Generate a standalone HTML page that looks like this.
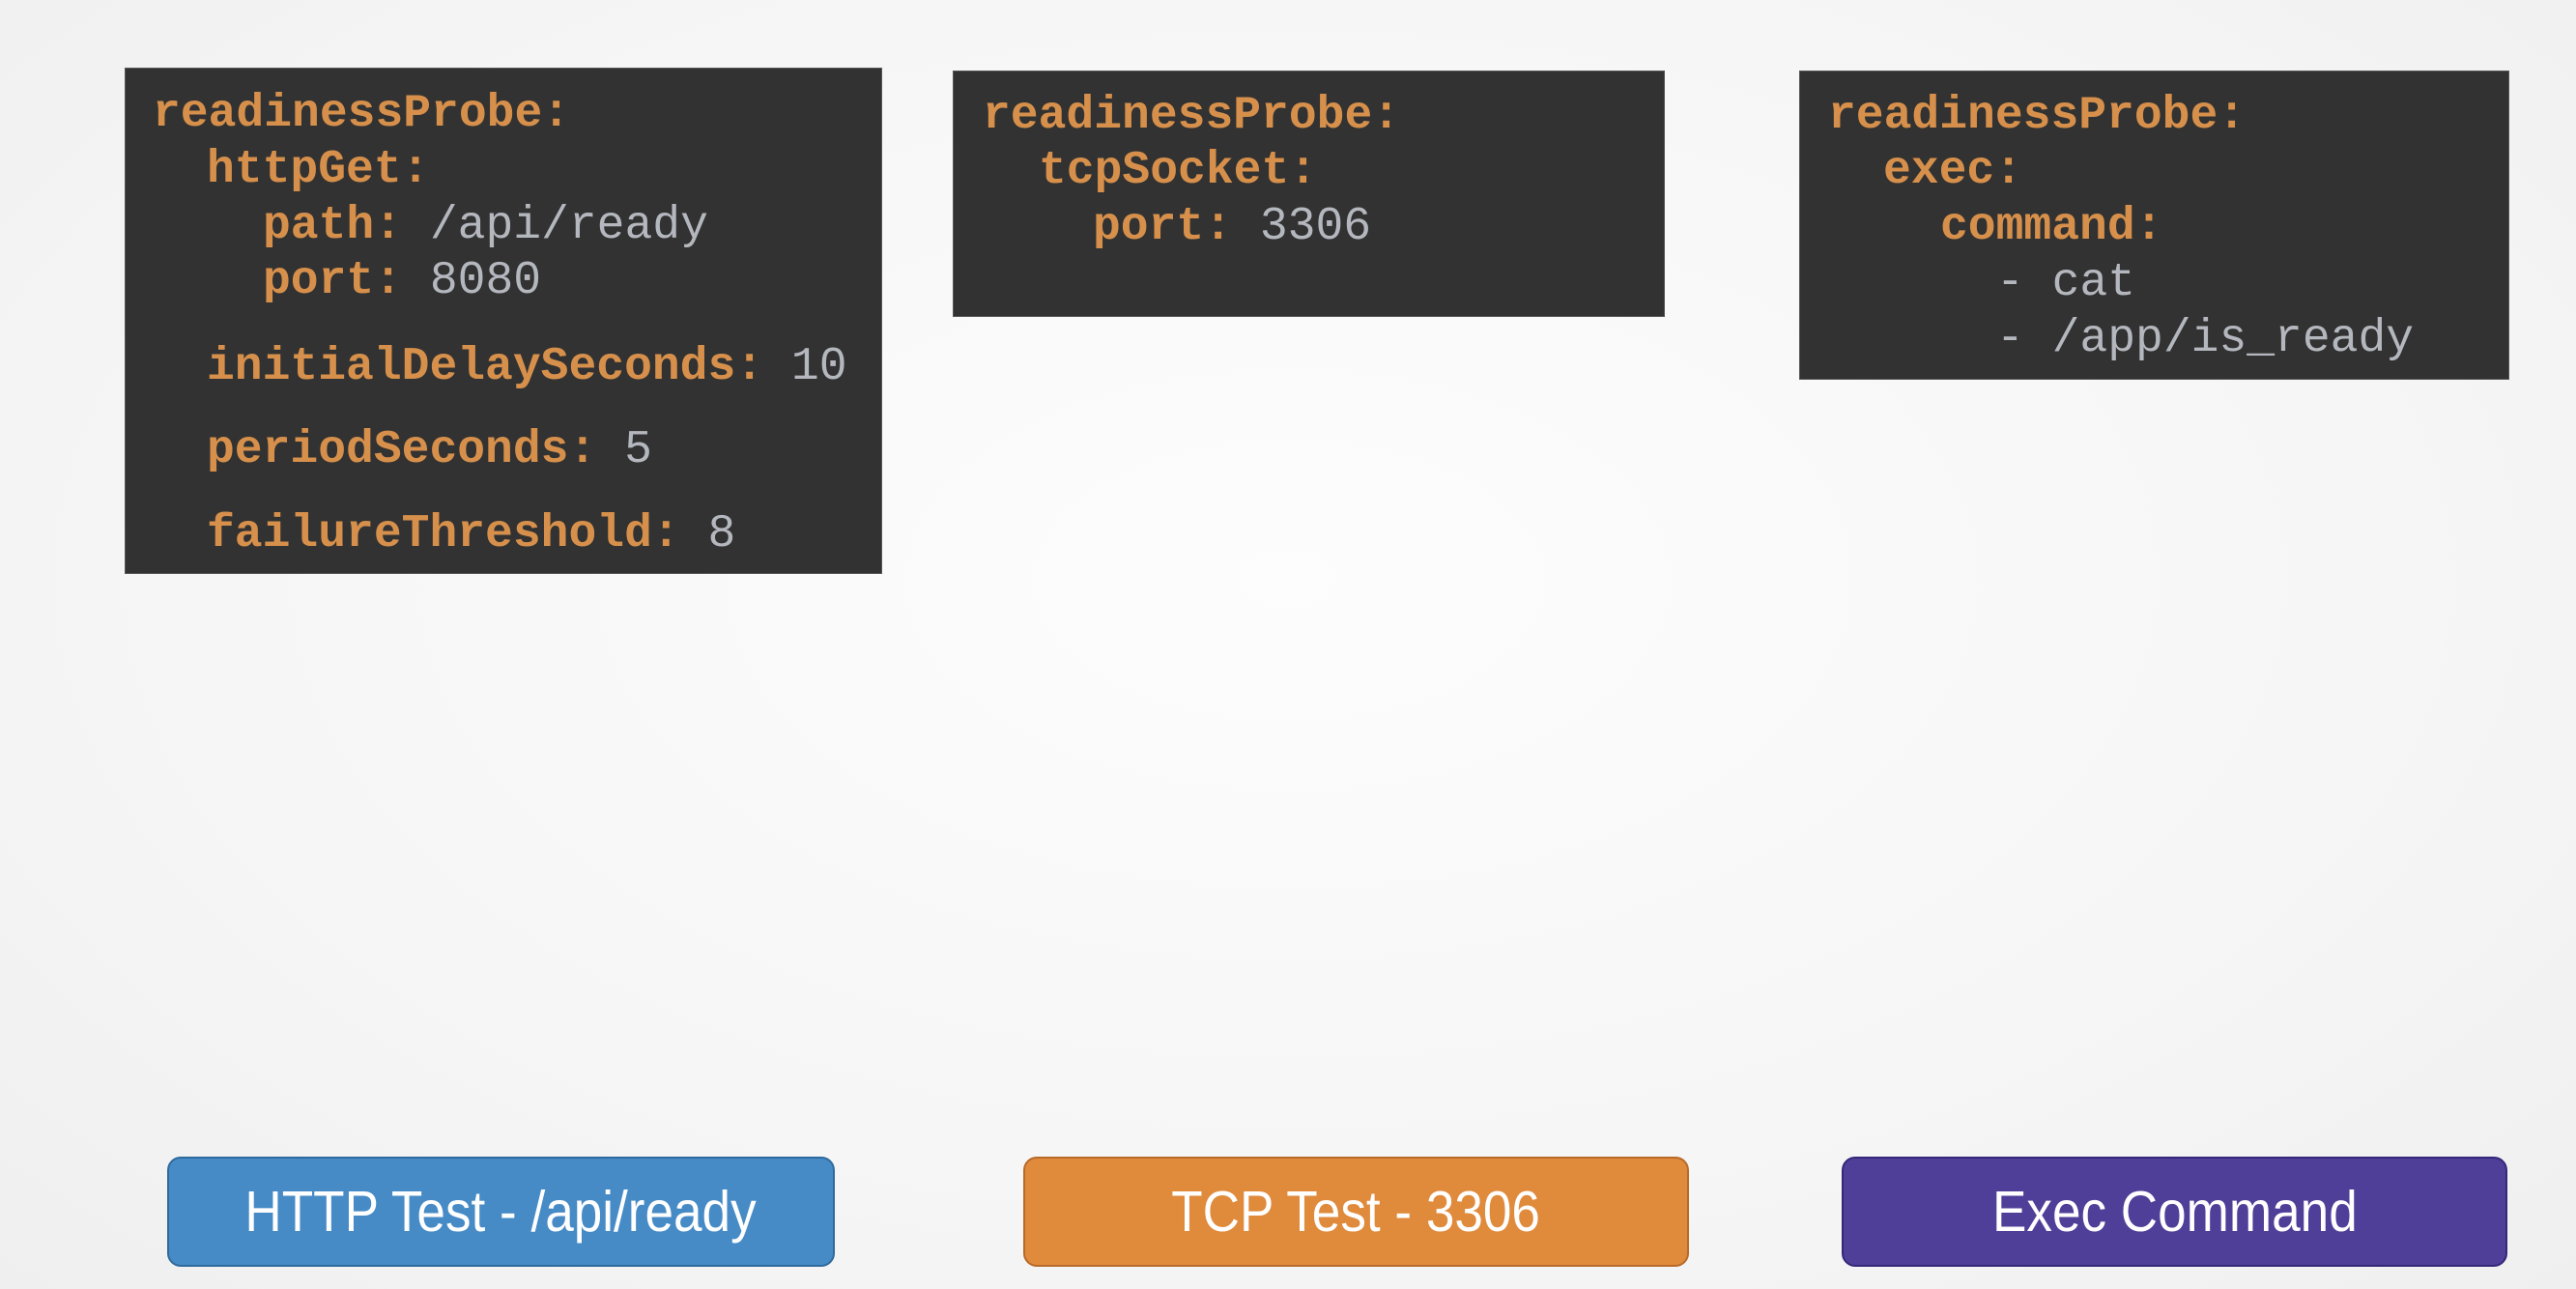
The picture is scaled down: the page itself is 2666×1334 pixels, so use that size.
<!DOCTYPE html>
<html><head><meta charset="utf-8"><style>
body{margin:0;width:2666px;height:1334px;overflow:hidden;background:radial-gradient(ellipse at 50% 45%,#fdfdfd 0%,#f6f6f6 60%,#efefef 100%);position:relative;font-family:"Liberation Mono",monospace;}
.box{position:absolute;background:#323232;border:1px solid #555;}
.l{position:absolute;font-size:48px;line-height:58px;white-space:pre;color:#d6904b;font-weight:bold;}
.v{color:#b4b8be;font-weight:normal;}
.btn{position:absolute;height:114px;border-radius:14px;color:#fff;font-family:"Liberation Sans",sans-serif;font-size:59px;display:flex;align-items:center;justify-content:center;box-sizing:border-box;}
.btn span{display:inline-block;transform:scaleX(0.9);}
</style></head><body>
<div class="box" style="left:129px;top:70px;width:782px;height:522px"></div>
<div class="l" style="left:158px;top:89px">readinessProbe:</div>
<div class="l" style="left:214px;top:147px">httpGet:</div>
<div class="l" style="left:272px;top:205px">path: <span class="v">/api/ready</span></div>
<div class="l" style="left:272px;top:262px">port: <span class="v">8080</span></div>
<div class="l" style="left:214px;top:351px">initialDelaySeconds: <span class="v">10</span></div>
<div class="l" style="left:214px;top:437px">periodSeconds: <span class="v">5</span></div>
<div class="l" style="left:214px;top:524px">failureThreshold: <span class="v">8</span></div>

<div class="box" style="left:986px;top:73px;width:735px;height:253px"></div>
<div class="l" style="left:1017px;top:91px">readinessProbe:</div>
<div class="l" style="left:1075px;top:148px">tcpSocket:</div>
<div class="l" style="left:1131px;top:206px">port: <span class="v">3306</span></div>

<div class="box" style="left:1862px;top:73px;width:733px;height:318px"></div>
<div class="l" style="left:1892px;top:91px">readinessProbe:</div>
<div class="l" style="left:1949px;top:148px">exec:</div>
<div class="l" style="left:2008px;top:206px">command:</div>
<div class="l v" style="left:2066px;top:264px">- cat</div>
<div class="l v" style="left:2066px;top:322px">- /app/is_ready</div>

<div class="btn" style="left:173px;top:1197px;width:691px;background:#478bc6;border:2px solid #2f6a9e"><span>HTTP Test - /api/ready</span></div>
<div class="btn" style="left:1059px;top:1197px;width:689px;background:#e08a3c;border:2px solid #b86a28"><span>TCP Test - 3306</span></div>
<div class="btn" style="left:1906px;top:1197px;width:689px;background:#4f3f98;border:2px solid #352878"><span>Exec Command</span></div>
</body></html>
